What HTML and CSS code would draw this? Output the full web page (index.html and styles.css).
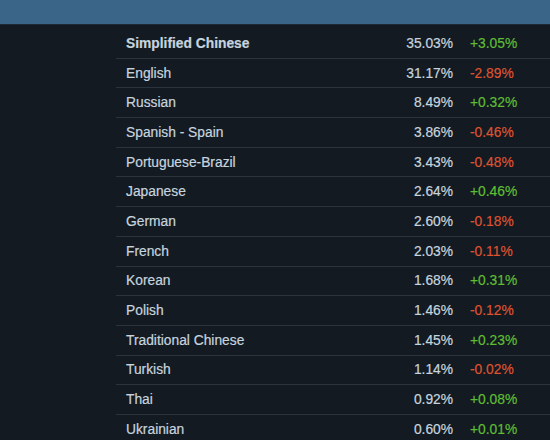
FILE: index.html
```html
<!DOCTYPE html>
<html lang="en">
<head>
    <meta charset="UTF-8">
    <title>Steam Languages</title>
    <link rel="stylesheet" href="styles.css">
</head>
<body>
    <div class="topbar"></div>
    <div class="stats">
        <div class="row first"><span class="lang">Simplified Chinese</span><span class="pct">35.03%</span><span class="chg up">+3.05%</span></div>
        <div class="row"><span class="lang">English</span><span class="pct">31.17%</span><span class="chg down">-2.89%</span></div>
        <div class="row"><span class="lang">Russian</span><span class="pct">8.49%</span><span class="chg up">+0.32%</span></div>
        <div class="row"><span class="lang">Spanish - Spain</span><span class="pct">3.86%</span><span class="chg down">-0.46%</span></div>
        <div class="row"><span class="lang">Portuguese-Brazil</span><span class="pct">3.43%</span><span class="chg down">-0.48%</span></div>
        <div class="row"><span class="lang">Japanese</span><span class="pct">2.64%</span><span class="chg up">+0.46%</span></div>
        <div class="row"><span class="lang">German</span><span class="pct">2.60%</span><span class="chg down">-0.18%</span></div>
        <div class="row"><span class="lang">French</span><span class="pct">2.03%</span><span class="chg down">-0.11%</span></div>
        <div class="row"><span class="lang">Korean</span><span class="pct">1.68%</span><span class="chg up">+0.31%</span></div>
        <div class="row"><span class="lang">Polish</span><span class="pct">1.46%</span><span class="chg down">-0.12%</span></div>
        <div class="row"><span class="lang">Traditional Chinese</span><span class="pct">1.45%</span><span class="chg up">+0.23%</span></div>
        <div class="row"><span class="lang">Turkish</span><span class="pct">1.14%</span><span class="chg down">-0.02%</span></div>
        <div class="row"><span class="lang">Thai</span><span class="pct">0.92%</span><span class="chg up">+0.08%</span></div>
        <div class="row"><span class="lang">Ukrainian</span><span class="pct">0.60%</span><span class="chg up">+0.01%</span></div>
    </div>
</body>
</html>
```

FILE: styles.css
```css
body {
    margin: 0;
    background: #131a22;
    color: #c6d4df;
    font-family: 'Liberation Sans', Arial, sans-serif;
    font-size: 13.8px;
    overflow: hidden;
}
.topbar {
    height: 24px;
    background: #3a6488;
    border-bottom: 1px solid #1c2a38;
}
.stats {
    margin-left: 116px;
    padding-top: 4px;
}
.row {
    display: flex;
    align-items: center;
    height: 29.7px;
    box-sizing: border-box;
    padding-left: 10px;
    border-bottom: 1px solid #2b333d;
    -webkit-text-stroke: 0.2px;
}
.first .lang {
    font-weight: bold;
}
.lang {
    flex: 1;
}
.pct {
    width: 80px;
    text-align: right;
}
.chg {
    width: 80px;
    margin-left: 17px;
}
.up {
    color: #5fbd33;
}
.down {
    color: #de5330;
}
```
